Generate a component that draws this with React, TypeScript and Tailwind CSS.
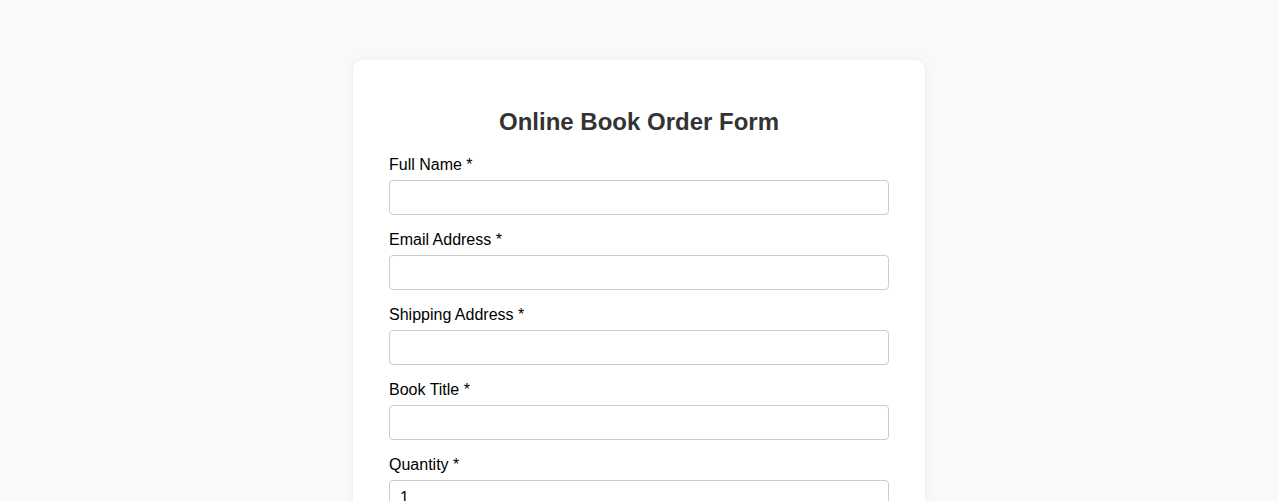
const fields = [
  { label: "Full Name *", type: "text" },
  { label: "Email Address *", type: "email" },
  { label: "Shipping Address *", type: "text" },
  { label: "Book Title *", type: "text" },
];

export default function App() {
  return (
    <div className="min-h-screen bg-[#f9f9f9] pt-[60px] pb-10 font-['Liberation_Sans',Arial,sans-serif]">
      <div className="mx-auto w-[572px] rounded-[10px] bg-white px-9 pt-[48px] pb-9 shadow-[0_0_10px_rgba(0,0,0,0.06)]">
        <h2 className="mb-[19px] text-center text-[24px] font-bold leading-[28px] text-[#333]">
          Online Book Order Form
        </h2>
        <form>
          {fields.map((f) => (
            <div key={f.label}>
              <label className="mb-[5px] block text-[16px] leading-[20px] text-black">
                {f.label}
              </label>
              <input
                type={f.type}
                className="mb-[15px] block h-[35px] w-full rounded-[4px] border border-[#ccc] px-[10px] text-[16px] outline-none"
              />
            </div>
          ))}
          <label className="mb-[5px] block text-[16px] leading-[20px] text-black">
            Quantity *
          </label>
          <input
            type="number"
            defaultValue={1}
            className="mb-[15px] block h-[35px] w-full rounded-[4px] border border-[#ccc] px-[10px] text-[16px] outline-none"
          />
          <label className="mb-[5px] block text-[16px] leading-[20px] text-black">
            Comments
          </label>
          <textarea className="mb-[15px] block h-[80px] w-full rounded-[4px] border border-[#ccc] px-[10px] text-[16px] outline-none" />
          <button
            type="button"
            className="h-[40px] w-full rounded-[4px] bg-[#4CAF50] text-[16px] text-white"
          >
            Place Order
          </button>
        </form>
      </div>
    </div>
  );
}
